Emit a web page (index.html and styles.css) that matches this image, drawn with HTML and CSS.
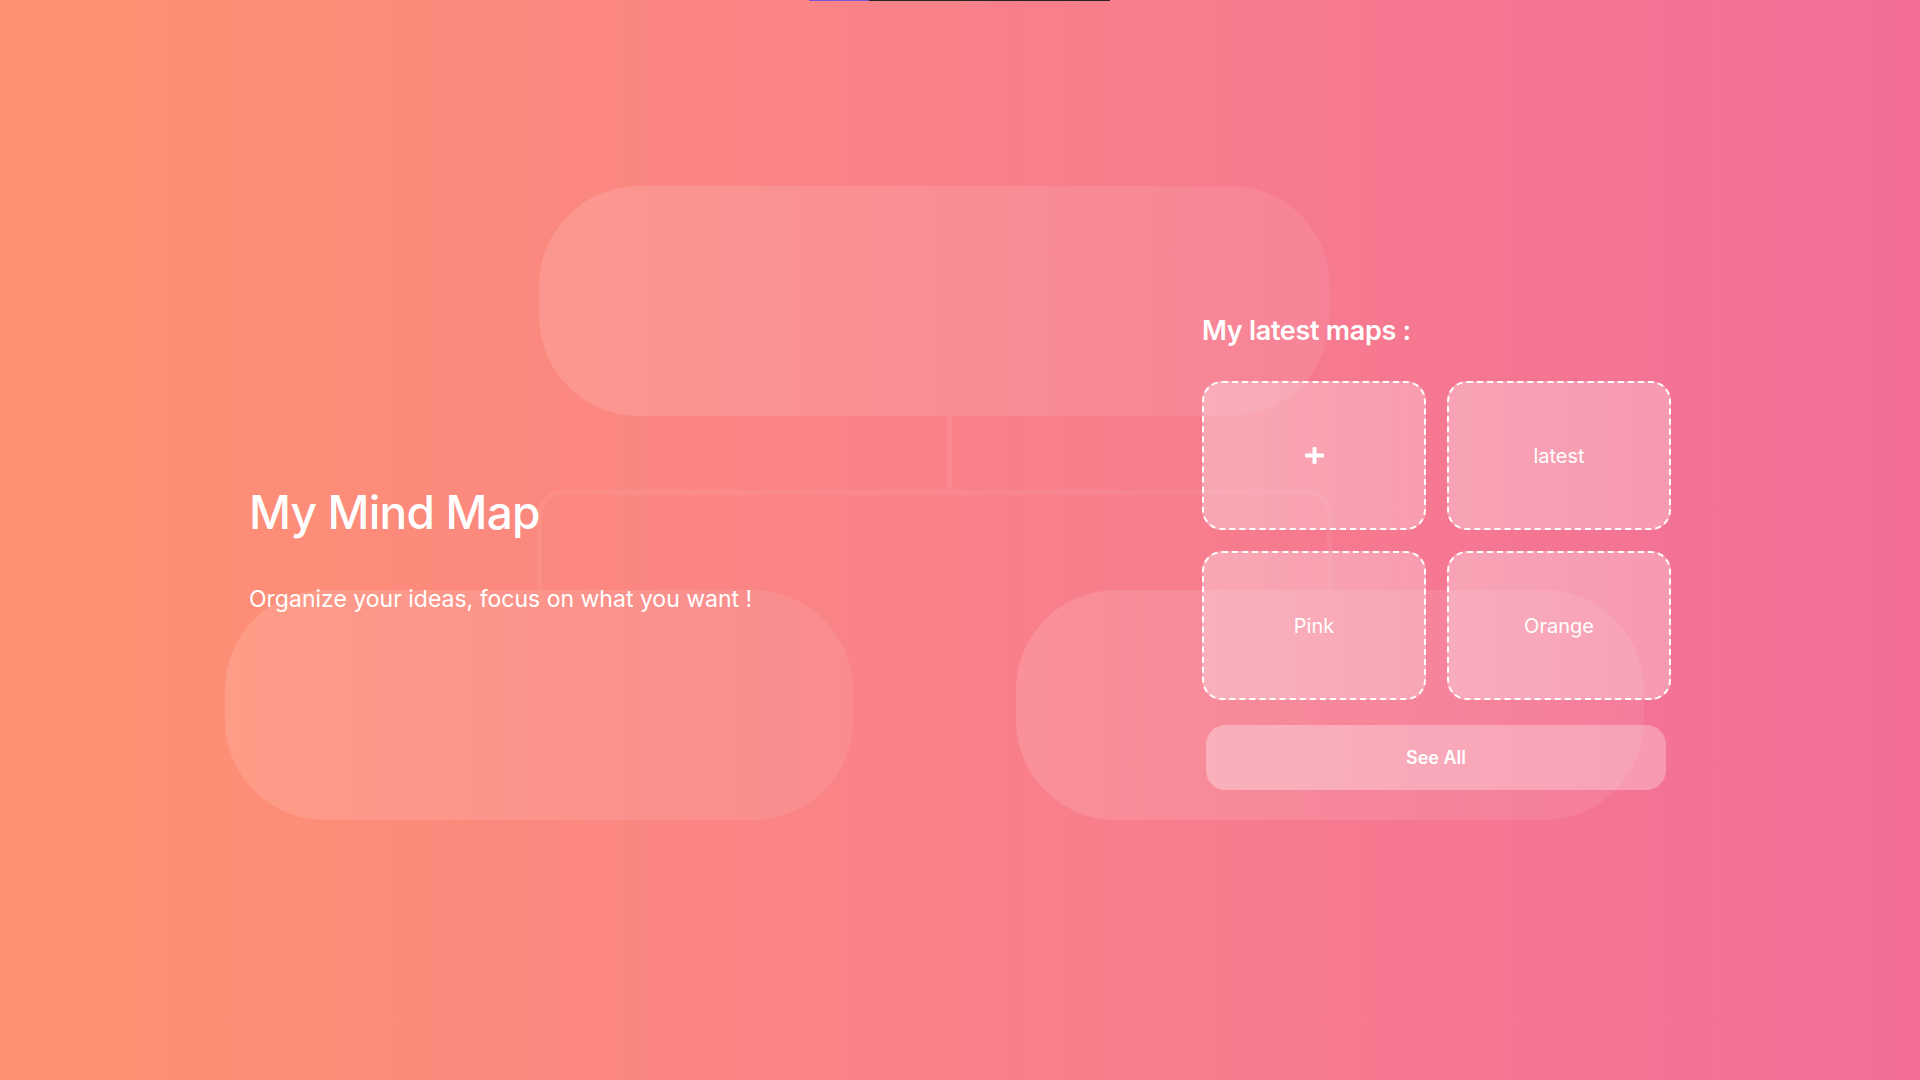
FILE: index.html
```html
<!DOCTYPE html>
<html lang="en">
<head>
<meta charset="utf-8">
<title>My Mind Map</title>
<link rel="stylesheet" href="styles.css">
</head>
<body>
<div class="page">
  <div class="topbar"><span class="topbar-progress"></span><span class="topbar-track"></span></div>

  <div class="diagram" aria-hidden="true">
    <div class="node node-root"></div>
    <div class="link-v"></div>
    <div class="link-bracket"></div>
    <div class="node node-left"></div>
    <div class="node node-right"></div>
  </div>

  <main class="content">
    <section class="intro">
      <h1 class="title">My Mind Map</h1>
      <p class="subtitle">Organize your ideas, focus on what you want !</p>
    </section>

    <section class="maps">
      <h2 class="maps-title">My latest maps :</h2>
      <div class="maps-grid">
        <div class="map-card map-card-new">
          <svg class="plus" width="19" height="17" viewBox="0 0 19 17"><rect x="0" y="6.5" width="19" height="4" rx="1" fill="#fff"/><rect x="7.5" y="0" width="4" height="17" rx="1" fill="#fff"/></svg>
        </div>
        <div class="map-card">latest</div>
        <div class="map-card">Pink</div>
        <div class="map-card">Orange</div>
      </div>
      <button class="see-all">See All</button>
    </section>
  </main>
</div>
</body>
</html>
```

FILE: styles.css
```css
html, body {
  margin: 0;
  padding: 0;
}

body {
  font-family: "Inter", "Open Sans", "Liberation Sans", sans-serif;
  color: #fff;
}

.page {
  position: relative;
  width: 100%;
  height: 100vh;
  overflow: hidden;
  background: linear-gradient(90deg, #ff9270 0%, #f9818a 50%, #f26e98 100%);
}

/* thin indicator at the very top */
.topbar {
  position: absolute;
  top: 0;
  left: 809px;
  display: flex;
  height: 1px;
  z-index: 3;
}
.topbar-progress {
  width: 60px;
  background: #7b55d6;
}
.topbar-track {
  width: 241px;
  background: #222;
}

/* decorative mind map diagram in the background */
.diagram {
  position: absolute;
  inset: 0;
  z-index: 0;
}
.node {
  position: absolute;
  height: 230px;
  border-radius: 100px;
  background: linear-gradient(90deg, rgba(255,255,255,0.13), rgba(255,255,255,0.07));
}
.node-root {
  left: 539px;
  top: 186px;
  width: 791px;
}
.node-left {
  left: 225px;
  top: 590px;
  width: 628px;
}
.node-right {
  left: 1016px;
  top: 590px;
  width: 628px;
}
.link-v {
  position: absolute;
  left: 947px;
  top: 416px;
  width: 5px;
  height: 74px;
  background: rgba(255,255,255,0.06);
}
.link-bracket {
  position: absolute;
  left: 537px;
  top: 490px;
  width: 795px;
  height: 100px;
  box-sizing: border-box;
  border: 5px solid rgba(255,255,255,0.06);
  border-bottom: 0;
  border-radius: 25px 25px 0 0;
}

/* content */
.content {
  position: relative;
  z-index: 1;
  height: 100%;
  box-sizing: border-box;
  padding: 27px 249px 0;
  display: flex;
  justify-content: space-between;
  align-items: center;
}

.intro {
  margin-bottom: 10px;
}
.title {
  margin: 0;
  font-size: 46px;
  line-height: 48px;
  font-weight: 500;
  letter-spacing: -0.8px;
}
.subtitle {
  margin: 52px 0 0;
  font-size: 23px;
  line-height: 22px;
  font-weight: 400;
}

.maps {
  width: 469px;
  display: flex;
  flex-direction: column;
}
.maps-title {
  margin: 0;
  font-size: 27px;
  line-height: 27px;
  font-weight: 600;
  letter-spacing: -0.3px;
}
.maps-grid {
  margin-top: 37px;
  display: grid;
  grid-template-columns: 224px 224px;
  grid-auto-rows: 149px;
  gap: 21px;
}
.map-card {
  box-sizing: border-box;
  border: 2px dashed #fff;
  border-radius: 20px;
  background: linear-gradient(90deg, rgba(255,255,255,0.33), rgba(255,255,255,0.28));
  display: flex;
  align-items: center;
  justify-content: center;
  font-size: 20px;
  font-weight: 400;
}
.plus {
  display: block;
}

.see-all {
  margin: 25px 0 0 4px;
  width: 460px;
  height: 65px;
  border: 0;
  border-radius: 20px;
  background: linear-gradient(90deg, rgba(255,255,255,0.33), rgba(255,255,255,0.28));
  color: #fff;
  font-family: inherit;
  font-size: 18px;
  font-weight: 600;
  padding: 0;
}
```
